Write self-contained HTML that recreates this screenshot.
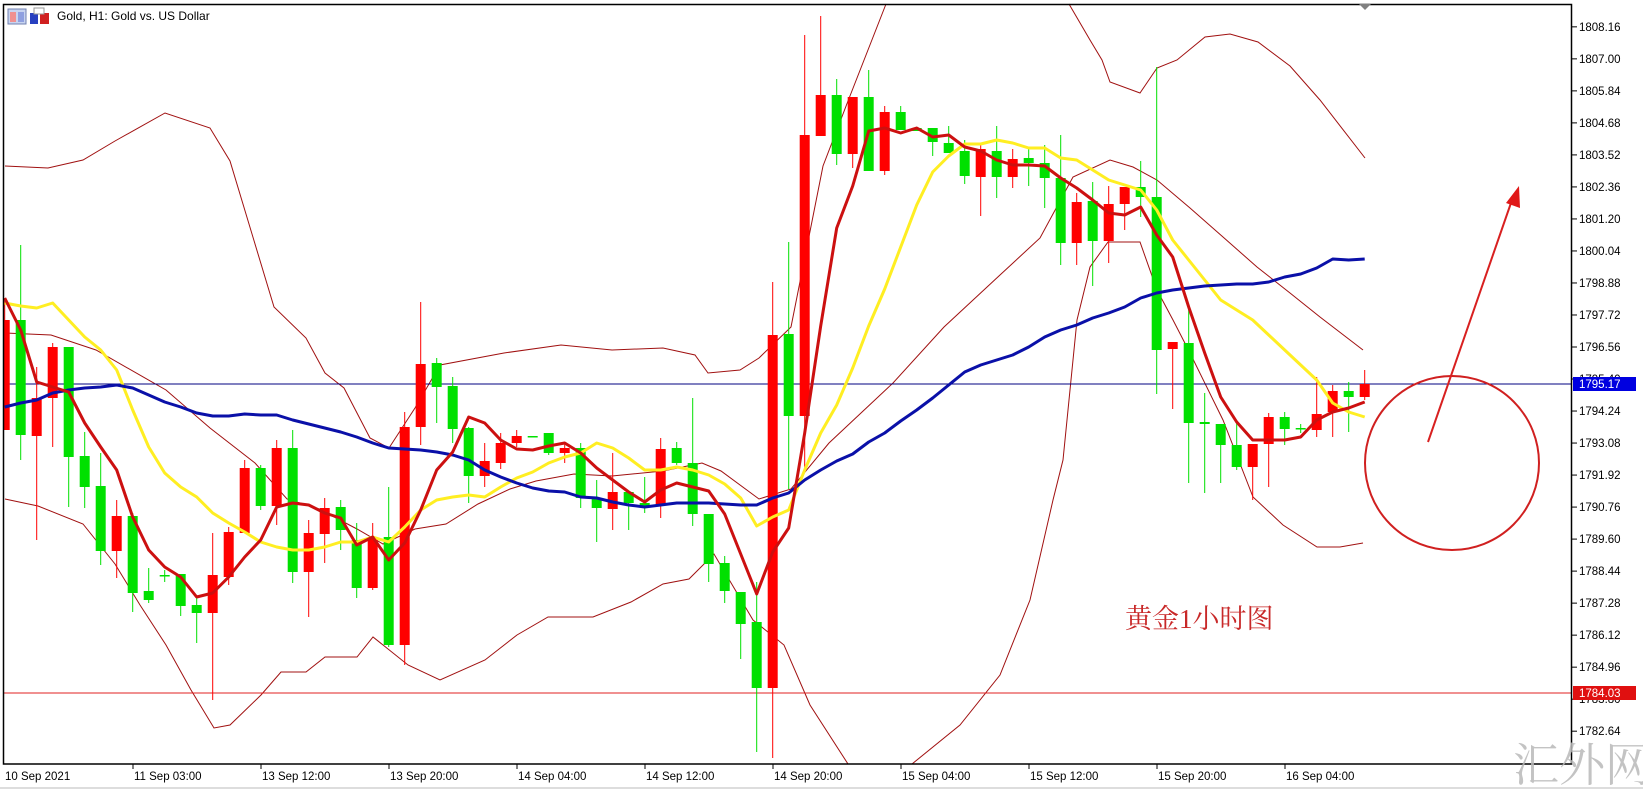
<!DOCTYPE html>
<html><head><meta charset="utf-8"><style>
html,body{margin:0;padding:0;background:#fff;width:1643px;height:790px;overflow:hidden}
svg{display:block}
text{font-family:"Liberation Sans",sans-serif}
</style></head><body>
<svg id="s" width="1643" height="790" xmlns="http://www.w3.org/2000/svg">
<rect width="1643" height="790" fill="#fff"/>
<line x1="0" y1="788" x2="1643" y2="788" stroke="#ddd" stroke-width="2"/>
<g id="bands" fill="none" stroke="#a01010" stroke-width="1"></g>
<line x1="4" y1="384" x2="1572" y2="384" stroke="#000080" stroke-width="1"/>
<line x1="4" y1="693" x2="1572" y2="693" stroke="#e02020" stroke-width="1"/>
<g id="candles"></g>
<g id="mas" fill="none" stroke-width="3" stroke-linejoin="round"></g>
<rect x="3.5" y="4.5" width="1568" height="759.5" fill="none" stroke="#000" stroke-width="1.5"/>
<g id="axis" font-size="11.5" fill="#000"></g>
<polygon points="1359,4 1371,4 1365,10" fill="#808080"/>
<!-- icons -->
<rect x="8" y="9" width="18" height="15" fill="#c8d4f0" stroke="#7080b0"/>
<rect x="10" y="12" width="6" height="10" fill="#f09090"/>
<rect x="18" y="12" width="6" height="10" fill="#8fa0e0"/>
<path d="M30 13 h8 v11 h-8z" fill="#2840c0"/>
<path d="M40 13 h9 v11 h-9z" fill="#d02020"/>
<rect x="34" y="8" width="10" height="6" fill="#fff" stroke="#999"/>
<text x="57" y="20" font-size="12">Gold, H1:  Gold vs. US Dollar</text>
<text x="1125" y="628" font-size="27" fill="#c82828" style="font-family:'Liberation Serif','Noto Serif CJK SC',serif">黄金1小时图</text>
<circle cx="1452" cy="463" r="87" fill="none" stroke="#d02020" stroke-width="2"/>
<line x1="1428" y1="442" x2="1512" y2="200" stroke="#d82020" stroke-width="2"/>
<polygon points="1519,186 1506,203 1520,208" fill="#e01818"/>
<text x="1513" y="781" font-size="46" fill="#b8b8b8" fill-opacity="0.85" style="font-family:'Noto Serif CJK SC',serif">汇外网</text>
</svg>
<script>
var NS="http://www.w3.org/2000/svg";
function X(i){return 4.7+16*i;}
function el(p,t,a){var e=document.createElementNS(NS,t);for(var k in a)e.setAttribute(k,a[k]);p.appendChild(e);return e;}
var C=[
[320,430,300,430,'r'],[320,435,245,460,'g'],[398,436,367,540,'r'],[347,398,343,447,'r'],[347,457,347,507,'g'],
[456,487,432,508,'g'],[486,551,453,565,'g'],[516,551,500,578,'r'],[516,593,513,612,'g'],[591,600,568,603,'g'],
[575,576,570,582,'g'],[574,606,574,616,'g'],[605,613,597,643,'g'],[575,613,533,700,'r'],[532,577,527,585,'r'],
[468,533,460,533,'r'],[468,506,465,510,'g'],[448,506,440,525,'r'],[448,572,430,583,'g'],[533,572,520,617,'r'],
[508,534,498,563,'r'],[507,530,500,550,'g'],[540,588,523,598,'g'],[537,588,523,590,'r'],[537,645,487,647,'g'],
[427,645,412,665,'r'],[364,427,302,445,'r'],[363,387,358,423,'g'],[386,429,377,443,'g'],[428,476,427,503,'g'],
[461,476,443,487,'r'],[443,463,433,469,'r'],[436,443,430,447,'r'],[436,437,436,437,'g'],[433,453,433,455,'g'],
[448,453,443,463,'r'],[448,498,443,508,'g'],[498,508,480,542,'g'],[492,509,453,530,'r'],[492,503,492,530,'g'],
[503,507,477,513,'g'],[449,505,438,518,'r'],[448,463,442,465,'g'],[463,514,398,526,'g'],[514,564,514,582,'g'],
[563,591,556,603,'g'],[592,624,592,659,'g'],[622,688,582,752,'g'],[335,688,282,758,'r'],[334,416,242,489,'g'],
[135,416,35,470,'r'],[95,136,16,136,'r'],[95,154,79,165,'g'],[97,154,97,168,'r'],[97,171,70,171,'g'],
[112,171,106,175,'r'],[112,130,106,130,'g'],[128,131,128,131,'g'],[128,142,128,156,'g'],[143,153,126,153,'g'],
[151,176,140,184,'g'],[149,177,144,216,'r'],[151,177,126,198,'g'],[159,177,149,188,'r'],[158,163,148,186,'g'],
[163,178,145,208,'g'],[178,243,135,265,'g'],[202,243,193,265,'r'],[201,241,182,286,'g'],[204,241,186,263,'r'],
[187,204,187,230,'r'],[187,197,161,217,'g'],[197,350,67,394,'g'],[342,349,342,409,'r'],[343,423,308,483,'g'],
[422,424,393,493,'g'],[424,445,424,483,'g'],[445,467,422,470,'g'],[444,467,444,500,'r'],[417,444,413,487,'r'],
[417,429,412,445,'g'],[428,429,424,433,'g'],[414,430,377,437,'r'],[391,412,385,437,'r'],[391,397,382,432,'g'],
[384,397,370,400,'r']];
var cg=document.getElementById('candles');
C.forEach(function(c,i){var x=X(i),col=c[4]=='r'?'#ff0000':'#00e000';
el(cg,'line',{x1:x,x2:x,y1:c[2],y2:c[3],stroke:col,'stroke-width':1});
var h=Math.max(c[1]-c[0],1.5);var l=Math.max(x-5,4);
el(cg,'rect',{x:l,y:c[0],width:x+5-l,height:h,fill:col});});
function pl(arr){return arr.map(function(y,i){return X(i).toFixed(1)+','+y;}).join(' ');}
var RED=[298,330,382,387,392,423,447,470,517,550,567,577,597,593,577,557,540,507,503,505,513,518,545,537,560,543,510,470,452,417,423,440,449,450,446,443,453,468,480,492,502,490,483,487,491,514,554,594,552,528,433,326,228,186,131,128,133,128,137,135,147,151,160,165,165,166,178,188,200,213,215,207,235,257,307,353,397,422,440,440,440,437,420,412,408,402];
var YEL=[303,306,308,303,320,337,350,370,410,447,473,487,497,513,523,532,542,547,550,550,547,542,542,537,542,527,510,500,497,495,497,487,478,472,463,457,453,443,448,458,470,470,467,470,475,484,498,526,517,510,470,433,405,368,326,289,247,205,172,156,144,144,140,143,148,148,158,160,170,180,185,190,210,240,260,280,300,310,320,335,350,365,380,403,412,417];
var BLU=[407,403,400,393,390,388,387,385,388,395,402,407,413,416,416,414,415,415,420,424,428,432,437,443,448,449,450,452,455,460,470,477,483,488,491,492,497,498,502,505,507,505,503,503,503,504,505,505,498,493,480,470,461,454,442,433,421,410,398,385,372,365,360,355,347,337,330,325,318,313,307,298,293,290,288,286,285,284,284,282,277,274,268,259,260,259];
var mg=document.getElementById('mas');
el(mg,'polyline',{points:pl(YEL),stroke:'#ffee22'});
el(mg,'polyline',{points:pl(BLU),stroke:'#0a10a8'});
el(mg,'polyline',{points:pl(RED),stroke:'#cc1010'});
var bg=document.getElementById('bands');
var UP="5,166 48,168 83,160 115,141 165,113 210,128 230,161 274,307 306,338 325,373 344,388 370,438 389,448 415,408 440,365 504,353 561,345 612,350 663,348 695,355 708,373 740,370 759,358 791,327 823,166 848,101 886,4";
var UP2="1069,4 1090,40 1102,60 1110,82 1140,93 1157,68 1177,60 1205,37 1230,34 1258,42 1290,66 1320,100 1365,158";
var MID="5,333 51,335 96,350 166,390 210,428 255,463 287,499 319,509 357,529 383,544 415,529 446,524 478,504 510,489 536,481 574,474 612,476 663,471 702,463 721,471 759,499 791,489 829,443 893,383 944,327 1000,275 1040,238 1073,177 1110,160 1133,167 1157,180 1190,208 1223,237 1257,267 1290,293 1320,317 1363,350";
var LOW="5,499 38,506 83,524 115,564 140,605 166,645 191,690 214,728 230,725 261,695 281,672 306,672 325,657 357,657 373,637 408,665 440,680 485,660 517,635 548,617 593,617 631,602 663,584 689,579 714,554 753,620 784,645 810,705 848,764";
var LOW2="912,764 960,725 1000,675 1030,600 1053,500 1063,460 1077,320 1090,267 1108,242 1140,242 1157,290 1173,320 1190,353 1223,420 1253,497 1283,525 1317,547 1340,547 1363,543";
[UP,UP2,MID,LOW,LOW2].forEach(function(p){el(bg,'polyline',{points:p});});
var ag=document.getElementById('axis');
for(var k=0;k<23;k++){var p=1808.16-1.16*k;var y=347+(1796.56-p)*27.6;
el(ag,'line',{x1:1572,x2:1577,y1:y,y2:y,stroke:'#000'});
var t=el(ag,'text',{x:1579,y:y+4});t.textContent=p.toFixed(2);}
var r1=el(ag,'rect',{x:1573,y:377,width:63,height:14,fill:'#0000e0'});
var t1=el(ag,'text',{x:1579,y:388,fill:'#fff'});t1.textContent='1795.17';
el(ag,'rect',{x:1573,y:686,width:63,height:14,fill:'#e01010'});
var t2=el(ag,'text',{x:1579,y:697,fill:'#fff'});t2.textContent='1784.03';
var L=['10 Sep 2021','11 Sep 03:00','13 Sep 12:00','13 Sep 20:00','14 Sep 04:00','14 Sep 12:00','14 Sep 20:00','15 Sep 04:00','15 Sep 12:00','15 Sep 20:00','16 Sep 04:00'];
L.forEach(function(s,i){var x=i==0?5:5+128*i;if(i>0)el(ag,'line',{x1:x,x2:x,y1:764,y2:769,stroke:'#000'});
var t=el(ag,'text',{x:x+(i==0?0:1),y:780});t.textContent=s;});
</script>
</body></html>
